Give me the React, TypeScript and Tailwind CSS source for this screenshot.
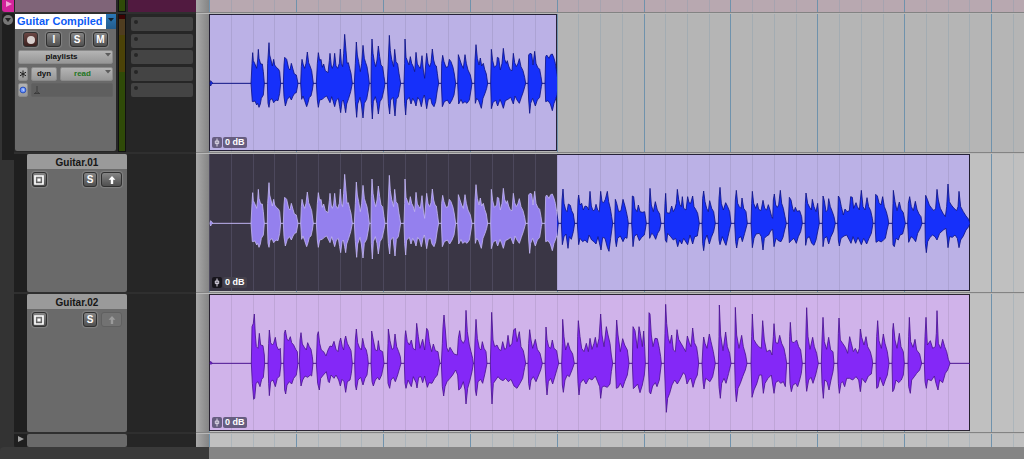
import React from 'react';

type Burst = [start: number, end: number, top: string, bottom: string];
type Section = [offset: number, bursts: Burst[]];

/* Envelope points are "time,amplitude" pairs, three units to a pixel. */
const BLUE_A: Section[] = [
  [-30, [
    [30, 38, '32,8 35,5', '32,8 34,3'],
    [153, 193, '156,60 158,92 160,68 164,60 170,45 173,70 175,102 177,75 182,58 187,58 190,35', '157,55 165,53 170,65 173,60 177,72 181,62 184,45 190,35'],
    [202, 242, '203,60 207,122 209,85 213,70 217,52 221,72 224,55 229,48 236,42 239,35', '204,60 207,72 210,50 216,46 221,58 228,50 234,52 239,30'],
    [250, 294, '252,55 254,78 260,72 266,45 270,40 274,60 279,42 283,28 289,25 292,10', '252,40 256,68 262,48 269,40 274,50 279,38 284,30 289,28'],
    [302, 340, '304,50 306,72 310,55 314,45 318,60 322,94 326,62 330,52 335,38', '305,48 309,38 314,52 320,70 324,58 328,42 333,38 337,20'],
    [349, 457, '352,60 355,92 359,68 363,72 367,48 371,58 376,38 384,32 388,68 390,90 394,52 397,45 401,58 404,90 408,52 413,45 418,60 421,103 424,60 428,50 431,90 434,147 438,98 441,60 445,62 449,45 453,30', '352,50 355,72 359,50 367,48 373,42 380,38 386,50 390,58 395,40 399,52 404,70 409,50 415,45 419,70 422,88 426,55 430,50 434,70 437,88 440,62 446,45 452,25'],
    [463, 508, '466,60 469,124 472,85 476,65 481,35 485,60 489,114 493,75 497,62 501,50 505,25', '466,55 470,102 473,62 480,42 484,62 489,104 493,60 500,48 505,20'],
    [513, 555, '514,80 516,133 519,90 523,65 527,50 531,70 535,112 539,80 543,55 548,50 552,20', '514,60 517,107 520,55 526,40 531,60 535,92 540,55 546,45 552,18'],
  ]],
  [510, [
    [22, 62, '25,70 28,144 31,98 35,72 41,50 44,102 48,65 53,58 57,30', '25,60 29,92 32,50 39,42 45,98 49,48 55,40'],
    [72, 176, '74,60 75,133 78,78 82,68 87,55 91,80 95,60 100,50 104,35 108,93 112,58 117,50 121,45 126,83 130,40 134,15 137,55 140,90 144,60 149,50 153,62 157,103 161,70 165,55 169,52 172,30', '74,60 77,95 80,50 88,42 93,62 98,45 104,55 108,68 113,42 119,50 124,70 129,45 133,35 136,50 140,76 145,48 152,45 156,62 162,70 167,55 172,20'],
    [184, 227, '185,60 188,84 192,65 198,48 204,50 208,72 213,65 219,48 223,28', '187,70 193,55 202,50 209,62 216,50 222,35'],
    [233, 276, '235,86 240,70 245,55 250,45 255,86 259,60 264,40 271,25', '236,62 243,48 248,60 255,55 261,60 268,50 273,20'],
    [284, 323, '285,70 288,116 292,75 297,55 301,76 305,52 310,60 314,42 319,28', '286,60 290,45 296,52 304,75 309,45 315,30 320,15'],
    [332, 437, '334,102 338,68 343,48 350,55 352,78 356,76 361,40 366,60 370,105 374,72 379,60 382,68 386,52 391,40 396,38 400,90 404,62 409,50 414,60 418,74 423,50 429,38 434,18', '334,76 339,58 347,50 353,68 360,48 365,60 370,75 376,52 384,48 392,42 400,62 405,38 411,50 418,60 424,42 430,25'],
    [444, 486, '446,85 450,90 455,88 459,55 464,96 468,60 473,48 479,42 483,20', '446,50 449,90 452,60 458,45 466,68 472,50 479,42 484,10'],
    [495, 535, '497,80 500,85 507,75 512,86 517,88 522,75 526,60 530,35', '497,55 504,52 511,62 517,82 522,60 526,50 531,35'],
  ]],
];

const BLUE_B: Section[] = [
  [1005, [
    [49, 89, '51,70 54,103 57,60 62,40 66,35 70,58 76,54 80,38 85,28', '52,64 57,40 63,32 69,75 73,40 79,48 85,25'],
    [97, 203, '99,70 101,85 105,55 110,60 115,40 120,52 126,50 131,40 135,96 139,52 144,38 149,40 153,57 158,40 163,35 167,96 171,65 176,62 181,72 187,96 191,65 196,45 200,20', '101,64 105,45 113,55 120,50 127,58 132,35 140,50 147,55 153,62 159,40 168,80 173,42 180,45 187,72 192,84 197,45 201,15'],
    [209, 250, '211,72 215,60 221,35 228,38 234,72 239,55 244,35 248,15', '211,50 214,70 218,45 226,38 234,55 240,42 246,45'],
    [260, 304, '262,82 266,80 270,45 276,35 280,55 285,35 292,33 299,35', '264,70 268,40 275,32 283,52 290,42 298,35'],
    [312, 348, '313,60 315,105 319,55 325,35 331,65 337,40 344,28', '314,45 320,30 326,35 332,48 338,30 344,20'],
    [358, 463, '360,60 362,90 365,32 374,30 380,52 385,35 390,45 394,60 397,102 401,72 405,55 409,50 412,80 416,45 423,40 428,80 432,62 437,60 443,82 447,50 452,42 458,30', '361,50 365,57 368,30 377,40 385,50 392,45 398,70 404,50 410,62 416,45 428,64 435,35 443,62 449,40 457,38'],
    [471, 511, '473,75 476,97 480,65 485,45 490,35 494,68 500,45 506,35', '473,60 476,82 480,50 486,35 493,62 499,42 506,25'],
    [520, 558, '522,75 525,108 529,60 535,40 542,62 548,50 554,35', '522,50 525,64 532,40 540,60 543,66 549,40'],
    [569, 607, '571,70 574,99 578,60 583,50 588,45 591,76 596,45 603,35', '572,55 575,74 580,45 588,40 592,55 599,30'],
  ]],
  [1620, [
    [3, 109, '5,60 7,96 11,60 17,45 22,60 26,42 33,38 39,69 44,45 50,40 55,56 60,40 65,20 68,15 70,70 73,88 77,55 82,48 86,55 91,99 95,60 100,45 105,20', '7,73 12,45 18,32 28,30 34,40 39,80 43,45 50,38 56,35 62,22 68,18 72,70 78,45 85,52 93,55 99,42 104,20'],
    [115, 157, '118,78 123,70 128,45 132,35 136,48 141,36 149,38 155,20', '118,58 125,50 132,45 139,60 145,40 152,25'],
    [165, 208, '166,60 168,91 173,60 179,48 184,40 187,72 192,50 198,35 203,60', '167,66 171,45 178,40 185,60 192,66 198,50 204,20'],
    [217, 256, '219,82 223,68 228,35 233,40 236,74 241,50 247,35 252,20', '219,70 223,45 230,40 236,62 242,42 250,25'],
    [263, 369, '265,82 269,75 274,50 280,25 285,43 291,35 298,38 302,80 307,78 311,45 318,62 322,50 328,40 334,99 339,50 345,40 351,77 356,50 362,38 367,15', '265,50 268,68 273,45 282,38 290,35 298,50 303,60 309,40 317,60 324,42 334,64 341,45 350,62 357,45 364,30'],
    [375, 416, '377,87 382,82 387,62 393,55 398,80 403,50 409,35 414,15', '378,57 386,52 394,56 400,50 406,45 411,20'],
    [427, 466, '429,60 430,99 435,65 441,38 448,64 453,42 460,32', '429,65 433,70 438,45 445,50 450,35 458,32'],
    [473, 516, '475,60 479,80 484,50 490,38 496,66 501,42 507,28 513,20', '476,57 483,40 490,45 497,55 503,30 511,15'],
    [525, 660, '527,84 532,72 538,55 545,45 552,38 557,45 561,102 565,70 571,45 579,30 586,20 590,50 594,118 598,65 604,55 612,45 620,38 624,50 627,96 632,50 640,35 648,22 656,12', '526,60 529,88 533,55 540,42 548,35 555,40 561,50 569,30 580,20 588,15 592,50 594,73 599,40 607,42 615,35 622,45 627,73 632,50 640,38 648,20 656,10'],
  ]],
];

const VIOLET: Section[] = [
  [-30, [
    [30, 37, '32,6', '32,3'],
    [154, 194, '156,110 160,120 163,148 166,85 169,50 174,45 178,90 182,55 189,53 193,25', '157,60 161,108 164,105 168,60 174,55 180,70 185,48 190,42'],
    [204, 243, '206,60 208,100 212,62 217,55 221,60 226,78 230,52 236,40 241,45', '206,60 208,97 212,55 219,50 226,70 232,45 239,38'],
    [251, 294, '253,90 256,100 261,72 266,68 271,80 275,62 281,55 287,42 292,35', '254,80 257,92 261,65 268,55 275,62 281,45 289,35'],
    [298, 339, '300,70 303,92 307,58 313,48 319,40 323,62 328,50 333,42 337,20', '301,45 303,68 308,50 315,38 323,42 331,35 335,38'],
    [349, 457, '352,85 355,95 359,60 364,40 371,35 378,22 384,40 390,52 396,50 402,66 408,42 414,35 418,62 422,76 427,50 431,40 434,70 437,82 442,60 447,50 453,38', '353,60 358,80 362,45 370,35 379,25 385,55 388,58 393,35 402,45 408,35 416,50 421,68 426,48 432,55 437,87 442,55 450,50 454,30'],
    [464, 505, '466,70 469,103 473,62 478,48 484,40 488,75 493,50 499,40 503,20', '466,65 469,80 474,50 482,42 489,65 495,45 501,35'],
    [513, 552, '515,97 520,70 526,40 532,38 535,68 539,40 548,35', '516,55 520,68 526,50 533,42 538,50 545,35'],
    [562, 603, '564,60 565,103 570,68 576,42 581,45 585,88 590,50 596,35 601,20', '564,60 569,75 573,50 580,42 586,55 593,35'],
  ]],
  [600, [
    [-17, 90, '-15,80 -13,98 -8,65 -2,55 4,70 9,45 16,40 20,120 25,80 30,45 38,72 44,40 50,105 54,98 58,65 65,35 70,58 76,38 84,35 87,15', '-15,60 -12,75 -6,50 4,70 10,40 18,58 21,74 26,42 33,40 38,58 44,38 52,72 57,58 66,60 74,45 82,35 88,5'],
    [94, 190, '97,60 99,110 102,145 106,100 110,48 115,35 120,48 126,38 132,28 142,25 145,75 149,98 153,70 160,60 165,70 168,159 172,95 178,55 183,35 188,15', '97,70 101,98 105,70 111,55 120,45 128,35 137,20 143,35 146,80 152,75 160,55 165,80 168,122 173,75 180,50 186,25'],
    [193, 231, '195,70 198,132 202,75 208,45 213,40 217,65 222,45 228,35', '196,80 199,97 204,55 212,48 218,60 225,30'],
    [241, 347, '243,70 245,153 249,70 254,50 261,55 267,42 273,38 278,65 284,42 289,45 294,84 299,50 306,60 311,100 316,105 321,65 328,95 333,50 340,38 345,12', '243,60 246,122 250,60 257,50 264,40 271,48 279,52 287,45 295,55 303,48 312,68 321,75 330,60 338,45 344,12'],
    [354, 397, '356,60 359,101 363,70 368,45 376,72 382,42 390,30', '356,60 359,79 363,50 370,40 378,55 386,35 392,20'],
    [405, 446, '408,109 411,72 416,50 422,45 427,70 432,45 440,38', '408,60 411,95 415,55 422,45 428,62 436,35'],
    [455, 493, '457,60 458,132 462,80 467,40 474,62 480,42 488,28', '457,65 460,87 465,50 472,35 478,40 486,20'],
    [502, 608, '503,80 505,128 510,80 515,45 522,35 529,60 535,35 540,75 546,42 552,60 556,78 561,48 567,75 572,148 576,85 582,50 589,110 594,85 600,60 604,25', '504,60 507,95 511,60 520,48 528,62 537,45 546,50 556,38 563,55 569,70 572,105 576,72 582,68 592,72 600,62 604,25'],
  ]],
  [1170, [
    [46, 87, '48,80 50,130 54,85 61,35 68,74 74,55 82,40', '49,75 55,72 61,60 68,74 74,55 82,35'],
    [97, 136, '99,110 105,98 112,45 117,110 121,90 127,50 131,97 134,50', '100,76 106,70 113,62 120,88 127,65 133,35'],
    [145, 184, '147,152 150,148 154,85 159,50 165,75 172,74 178,45 182,20', '148,85 152,92 158,68 166,58 171,70 178,50'],
    [193, 296, '195,90 197,177 200,120 205,75 210,60 215,85 220,40 226,35 231,101 236,72 243,60 250,48 257,35 262,82 268,62 273,50 278,106 283,62 290,48 294,20', '196,80 199,147 203,105 209,90 216,65 224,50 232,62 240,48 250,28 256,35 261,62 268,48 273,45 279,72 285,50 292,35'],
    [306, 346, '309,55 311,79 315,60 321,45 328,88 333,65 340,35', '309,55 312,77 317,45 324,50 330,55 338,40'],
    [355, 393, '357,80 358,175 362,85 369,38 377,94 382,50 389,30', '357,70 361,105 365,60 372,45 378,60 386,30'],
    [404, 441, '406,168 410,85 417,45 425,84 430,50 437,25', '406,75 409,115 414,75 421,60 428,40 436,20'],
    [453, 560, '455,80 457,148 461,72 468,60 476,50 484,45 488,128 493,70 500,35 510,40 516,25 520,80 522,119 527,62 534,60 539,84 545,60 552,45 557,20', '456,102 462,80 470,62 478,35 485,35 490,90 495,60 504,45 514,35 522,90 527,58 535,52 542,60 550,55 556,70'],
  ]],
  [1740, [
    [-2, 37, '-1,80 1,123 5,65 12,62 20,70 26,50 32,40', '0,60 4,85 9,65 17,60 23,70 29,50 34,30'],
    [46, 85, '48,100 50,167 54,80 60,42 68,78 73,50 80,30', '48,60 50,84 56,50 63,42 69,60 77,35'],
    [94, 132, '96,70 99,138 103,65 110,42 116,78 122,40 129,35', '96,60 100,105 104,50 111,55 117,80 123,50 129,25'],
    [143, 248, '145,90 147,136 151,70 158,60 166,48 173,30 179,80 184,60 190,35 196,45 203,30 208,45 211,103 215,78 222,55 228,80 233,50 241,35 246,15', '145,60 148,90 153,60 158,55 164,70 170,45 179,45 188,50 198,40 206,50 211,85 216,45 226,58 235,38 244,32'],
    [258, 297, '260,80 263,128 267,68 274,45 280,88 285,60 292,35', '260,75 264,72 270,42 280,68 286,50 292,35'],
    [306, 343, '308,100 310,120 315,70 321,45 328,90 333,50 340,35', '308,85 312,78 318,50 326,58 334,50 340,35'],
    [354, 395, '356,80 358,138 362,65 369,48 375,72 380,40 389,28', '356,70 361,90 365,50 373,40 380,30 389,20'],
    [403, 480, '405,80 408,138 412,55 421,68 428,45 436,50 439,90 441,158 445,60 452,45 458,72 464,50 470,35 475,12', '405,55 409,75 413,48 424,52 433,38 438,60 444,80 449,50 458,58 466,30 473,20'],
  ]],
];

const CENTER = 208;

function toPath(sections: Section[]): string {
  const points = (text: string) => text.split(' ').map((p) => p.split(',').map(Number));
  return sections
    .flatMap(([offset, bursts]) =>
      bursts.map(([start, end, top, bottom]) => {
        const up = points(top).map(([x, a]) => `L${x + offset} ${CENTER - a}`);
        const down = points(bottom).reverse().map(([x, a]) => `L${x + offset} ${CENTER + a}`);
        return `M${start + offset} ${CENTER}${up.join('')}L${end + offset} ${CENTER}${down.join('')}Z`;
      }),
    )
    .join('');
}

const BLUE_PATH = toPath([...BLUE_A, ...BLUE_B]);
const VIOLET_PATH = toPath(VIOLET);

function Waveform({ path, className }: { path: string; className: string }) {
  return (
    <svg viewBox="-3 0 2283 414" className={`absolute left-0 top-0 h-[138px] w-[761px] ${className}`} aria-hidden="true">
      <path d={`M0 ${CENTER}H2280`} strokeWidth="3" />
      <path d={path} strokeWidth="2.5" strokeLinejoin="round" />
    </svg>
  );
}

const beatX = (beat: number) => Math.floor(beat * 21.72 + 0.7) + 0.5;

function BeatGrid({ minorClass, majorClass }: { minorClass: string; majorClass: string }) {
  return (
    <svg className="absolute inset-0 h-full w-full" aria-hidden="true">
      {Array.from({ length: 90 }, (_, i) => (
        <line key={i} x1={beatX(i)} x2={beatX(i)} y1="0" y2="100%" className={i % 4 === 0 ? majorClass : minorClass} />
      ))}
    </svg>
  );
}

function GainBadge({ dark = false }: { dark?: boolean }) {
  return (
    <div className="absolute bottom-[3px] left-[3px] flex h-[11px] gap-px text-[9px] font-bold leading-[11px] text-white">
      <span className={`flex w-[10px] items-center justify-center rounded-xs ${dark ? 'bg-[#17151c]' : 'bg-[#665d80]'}`}>
        <svg viewBox="0 0 8 9" className="h-[9px] w-2 fill-none stroke-[#ddd8e6]" aria-hidden="true">
          <path d="M4 .5v8M2.3 3h3.4v2.6H2.3z" />
        </svg>
      </span>
      <span className={`rounded-xs px-[2px] ${dark ? 'bg-[#45424d]' : 'bg-[#665d80]'}`}>0 dB</span>
    </div>
  );
}

const clipFrame = 'relative mb-px h-[137px] shrink-0 overflow-hidden outline -outline-offset-1';

function Divider() {
  return (
    <div className="flex h-[2px]">
      <div className="w-[182px] bg-[#2f2f2f]" />
      <div className="flex-1 border-t border-[#838383] bg-[#b9b9b9]" />
    </div>
  );
}

function Row({ panel, laneClass, children }: { panel: React.ReactNode; laneClass: string; children?: React.ReactNode }) {
  return (
    <div className="flex">
      <div className="flex w-[182px] shrink-0">{panel}</div>
      <div className="w-[13px] shrink-0 bg-linear-to-r from-[#a9a9a9] to-[#858585]" />
      <div className={`relative min-w-0 flex-1 overflow-hidden ${laneClass}`}>
        <BeatGrid minorClass="stroke-[#6f92ac]/25" majorClass="stroke-[#6f92ac]" />
        {children}
      </div>
    </div>
  );
}

const keyShape =
  'flex h-[15px] items-center justify-center rounded-[3px] border border-[#303030] bg-linear-to-b text-[10px] font-bold leading-none text-white shadow-[0_0_1px_1px_#828282]';
const greyKey = `${keyShape} from-[#858585] to-[#505050]`;
const recordKey = `${keyShape} from-[#6b4744] to-[#3c211f]`;
const lightKey =
  'h-[14px] rounded-xs border border-[#8a8a8a] bg-linear-to-b from-[#b4b4b4] to-[#979797] text-[8px] font-bold leading-[12px]';

function Caret({ className }: { className: string }) {
  return (
    <svg viewBox="0 0 6 4" className={`pointer-events-none absolute h-1 w-[6px] ${className}`} aria-hidden="true">
      <path d="M0 0h6L3 3.5z" />
    </svg>
  );
}

function TrackPanel() {
  return (
    <>
      <div className="ml-px h-[137px] w-[101px] overflow-hidden rounded-b-xs bg-[#6a6a6a]">
        <div className="flex h-[15px]">
          <button type="button" className="flex-1 whitespace-nowrap bg-white pl-[2px] text-left text-[11px] font-bold leading-[15px] text-[#0d5cf5]">
            Guitar Compiled
          </button>
          <button type="button" aria-label="Track menu" className="relative w-[10px] bg-linear-to-b from-[#2b78b8] to-[#235c8c]">
            <Caret className="left-[2px] top-1 fill-[#10202e]" />
          </button>
        </div>
        <div className="flex justify-between px-2 pt-[3px]">
          <button type="button" aria-label="Record enable" className={`w-[15px] ${recordKey}`}>
            <span className="size-2 rounded-full bg-[#d8cfcd]" />
          </button>
          <button type="button" className={`w-[15px] ${greyKey}`}>I</button>
          <button type="button" className={`w-[15px] ${greyKey}`}>S</button>
          <button type="button" className={`w-[15px] ${greyKey}`}>M</button>
        </div>
        <div className="flex h-[50px] flex-col justify-between px-[3px] pt-[3px]">
          <div className="relative">
            <select aria-label="Playlist" className={`block w-full appearance-none pr-2 text-[#111] [text-align-last:center] ${lightKey}`}>
              <option>playlists</option>
            </select>
            <Caret className="right-[2px] top-[3px] fill-[#5c5c5c]" />
          </div>
          <div className="flex gap-[3px]">
            <button type="button" aria-label="Freeze" className={`flex w-[10px] items-center justify-center ${lightKey}`}>
              <svg viewBox="0 0 8 8" className="size-2 shrink-0 stroke-[#222]" aria-hidden="true">
                <path d="M4 .5v7M1 2.2l6 3.6M7 2.2L1 5.8" />
              </svg>
            </button>
            <button type="button" className={`w-[26px] text-[#111] ${lightKey}`}>dyn</button>
            <div className="relative flex-1">
              <select aria-label="Automation mode" className={`block w-full appearance-none pr-2 text-[#1f751f] [text-align-last:center] ${lightKey}`}>
                <option>read</option>
              </select>
              <Caret className="right-[2px] top-[3px] fill-[#5c5c5c]" />
            </div>
          </div>
          <div className="flex gap-[3px]">
            <button type="button" aria-label="Timebase" className={`flex w-[10px] items-center justify-center ${lightKey}`}>
              <svg viewBox="0 0 8 8" className="size-2 shrink-0" aria-hidden="true">
                <circle cx="4" cy="4" r="2.9" className="fill-[#6f97fb] stroke-[#1f46b4]" strokeWidth=".9" />
                <path d="M4 2.4v1.8h1.2" className="fill-none stroke-[#e6edff]" strokeWidth=".8" />
              </svg>
            </button>
            <button type="button" aria-label="Elastic audio" className="flex h-[14px] flex-1 items-center rounded-xs border border-[#626262] bg-[#5f5f5f] pl-[2px]">
              <svg viewBox="0 0 6 8" className="h-2 w-[6px] fill-none stroke-[#3c3c3c]" aria-hidden="true">
                <path d="M3 0v5M0 7.5h6M1.2 7c.6-1.6 3-1.6 3.6 0" />
              </svg>
            </button>
          </div>
        </div>
      </div>
      <div className="ml-[2px] flex w-[8px] flex-col border border-[#111] bg-[#2f4a08]" role="meter" aria-label="Level" aria-valuenow={0}>
        <div className="h-1 bg-[#3c0303]" />
        <div className="h-4 bg-[#4f3d20]" />
        <div className="h-[37px] bg-[#4b4208]" />
      </div>
      <div className="ml-[2px] flex-1 bg-[#262626] px-[3px] pt-[3px]">
        <div className="flex h-[80px] flex-col justify-between">
          {[1, 2, 3, 4, 5].map((n) => (
            <button key={n} type="button" aria-label={`Insert ${n}`} className="flex h-[14px] w-[62px] rounded-xs bg-[#444] px-[3px] pt-[3px]">
              <span className="size-1 rounded-full bg-[#262626]" />
            </button>
          ))}
        </div>
      </div>
    </>
  );
}

function PlaylistPanel({ name, disabled = false }: { name: string; disabled?: boolean }) {
  return (
    <>
      <div className="w-[13px] bg-[#1f1f1f]" />
      <div className="h-[138px] w-[100px] overflow-hidden rounded-xs bg-[#6a6a6a]">
        <h2 className="h-[15px] bg-[#9a9a9a] pt-px text-center text-[10px] font-bold leading-[15px] text-[#151515]">{name}</h2>
        <div className="flex px-[5px] pt-[3px]">
          <button type="button" aria-label={`Audition ${name}`} className={`w-[15px] ${greyKey}`}>
            <svg viewBox="0 0 10 10" className="size-[10px] shrink-0 fill-none stroke-white" aria-hidden="true">
              <path d="M1 1h8v8H1z" strokeWidth="1.7" />
              <path d="M3.4 3.4h3.2v3.2H3.4z" className="fill-white stroke-none" />
            </svg>
          </button>
          <button type="button" className={`ml-9 w-[15px] ${greyKey}`}>S</button>
          <button type="button" disabled={disabled} aria-label={`Copy ${name} to main`}
            className={disabled ? 'ml-1 flex h-[15px] w-[21px] items-center justify-center rounded-[3px] border border-[#606060] bg-[#727272]' : `ml-1 w-[21px] ${greyKey}`}>
            <svg viewBox="0 0 8 8" className={`size-2 ${disabled ? 'fill-[#9b9b9b]' : 'fill-white'}`} aria-hidden="true">
              <path d="M4 0l3.4 3.8H5.2V8H2.8V3.8H.6z" />
            </svg>
          </button>
        </div>
      </div>
      <div className="ml-[1px] flex-1 bg-[#262626]" />
    </>
  );
}

export default function App() {
  return (
    <main className="flex min-h-screen flex-col overflow-hidden bg-[#333] font-['Liberation_Sans',Arial,sans-serif]">
      <div className="flex">
        <div className="w-[14px] shrink-0 bg-[#333] pl-[2px]">
          <div className="flex h-3 items-start rounded-bl-[3px] bg-[#d3239b] pl-1 pt-px">
            <svg viewBox="0 0 6 6" className="size-[6px] fill-[#f4a5d8]" aria-hidden="true"><path d="M0 0l6 3-6 3z" /></svg>
          </div>
          <div className="mt-px flex h-[147px] justify-center rounded-tl-[3px] bg-[#1f1f1f] pt-[2px]">
            <button type="button" aria-label="Collapse playlists" className="flex size-[10px] items-center justify-center rounded-full bg-[#777]">
              <svg viewBox="0 0 6 4" className="h-1 w-[6px] fill-[#222]" aria-hidden="true"><path d="M0 0h6L3 4z" /></svg>
            </button>
          </div>
        </div>
        <div className="min-w-0 flex-1 bg-[#262626]">
          <Row
            laneClass="bg-[#b8a8b0]"
            panel={
              <>
                <div className="ml-px h-3 w-[101px] bg-[#7f6478]" />
                <div className="ml-[2px] w-[8px] border-x border-b border-[#111] bg-[#2f4a08]" />
                <div className="ml-[2px] flex-1 bg-[#511a40]" />
              </>
            }
          />
          <Divider />
          <Row laneClass="bg-[#b5b5b5]" panel={<TrackPanel />}>
            <section aria-label="Guitar Compiled clip" className={`${clipFrame} w-[348px] bg-[#bbb1e6] outline-[#262238]`}>
              <BeatGrid minorClass="stroke-black/8" majorClass="stroke-black/8" />
              <Waveform path={BLUE_PATH} className="fill-[#1630fa] stroke-[#0d1385]" />
              <GainBadge />
            </section>
          </Row>
          <Divider />
          <Row laneClass="bg-[#c0c0c0]" panel={<PlaylistPanel name="Guitar.01" />}>
            <section aria-label="Guitar.01 clip" className={`${clipFrame} w-[761px] bg-[#bbb1e6] outline-[#262238]`}>
              <BeatGrid minorClass="stroke-black/8" majorClass="stroke-black/8" />
              <Waveform path={BLUE_PATH} className="fill-[#1630fa] stroke-[#0d1385]" />
              <div className="absolute inset-y-0 left-0 w-[348px] overflow-hidden bg-[#3a3645]">
                <BeatGrid minorClass="stroke-[#4c485c]" majorClass="stroke-[#4c485c]" />
                <Waveform path={BLUE_PATH} className="fill-[#9480ee] stroke-[#c0b4f2]" />
                <GainBadge dark />
              </div>
            </section>
          </Row>
          <Divider />
          <Row laneClass="bg-[#c0c0c0]" panel={<PlaylistPanel name="Guitar.02" disabled />}>
            <section aria-label="Guitar.02 clip" className={`${clipFrame} w-[761px] bg-[#d0b3ea] outline-[#2b2433]`}>
              <BeatGrid minorClass="stroke-black/8" majorClass="stroke-black/8" />
              <Waveform path={VIOLET_PATH} className="fill-[#8428f7] stroke-[#4a1391]" />
              <GainBadge />
            </section>
          </Row>
          <Divider />
          <Row
            laneClass="bg-[#c0c0c0]"
            panel={
              <>
                <div className="flex w-[13px] justify-center rounded-bl-[3px] bg-[#1f1f1f] pt-[2px]">
                  <button type="button" aria-label="Show more playlists" className="size-[6px]">
                    <svg viewBox="0 0 6 6" className="size-[6px] fill-[#a0a0a0]" aria-hidden="true"><path d="M0 0l6 3-6 3z" /></svg>
                  </button>
                </div>
                <div className="h-[13px] w-[100px] rounded-xs bg-[#6a6a6a]" />
              </>
            }
          />
        </div>
      </div>
      <footer className="flex min-h-3 flex-1">
        <div className="w-[209px] rounded-tl-[4px] bg-[#3a3a3a]" />
        <div className="flex-1 bg-[#858585]" />
      </footer>
    </main>
  );
}
